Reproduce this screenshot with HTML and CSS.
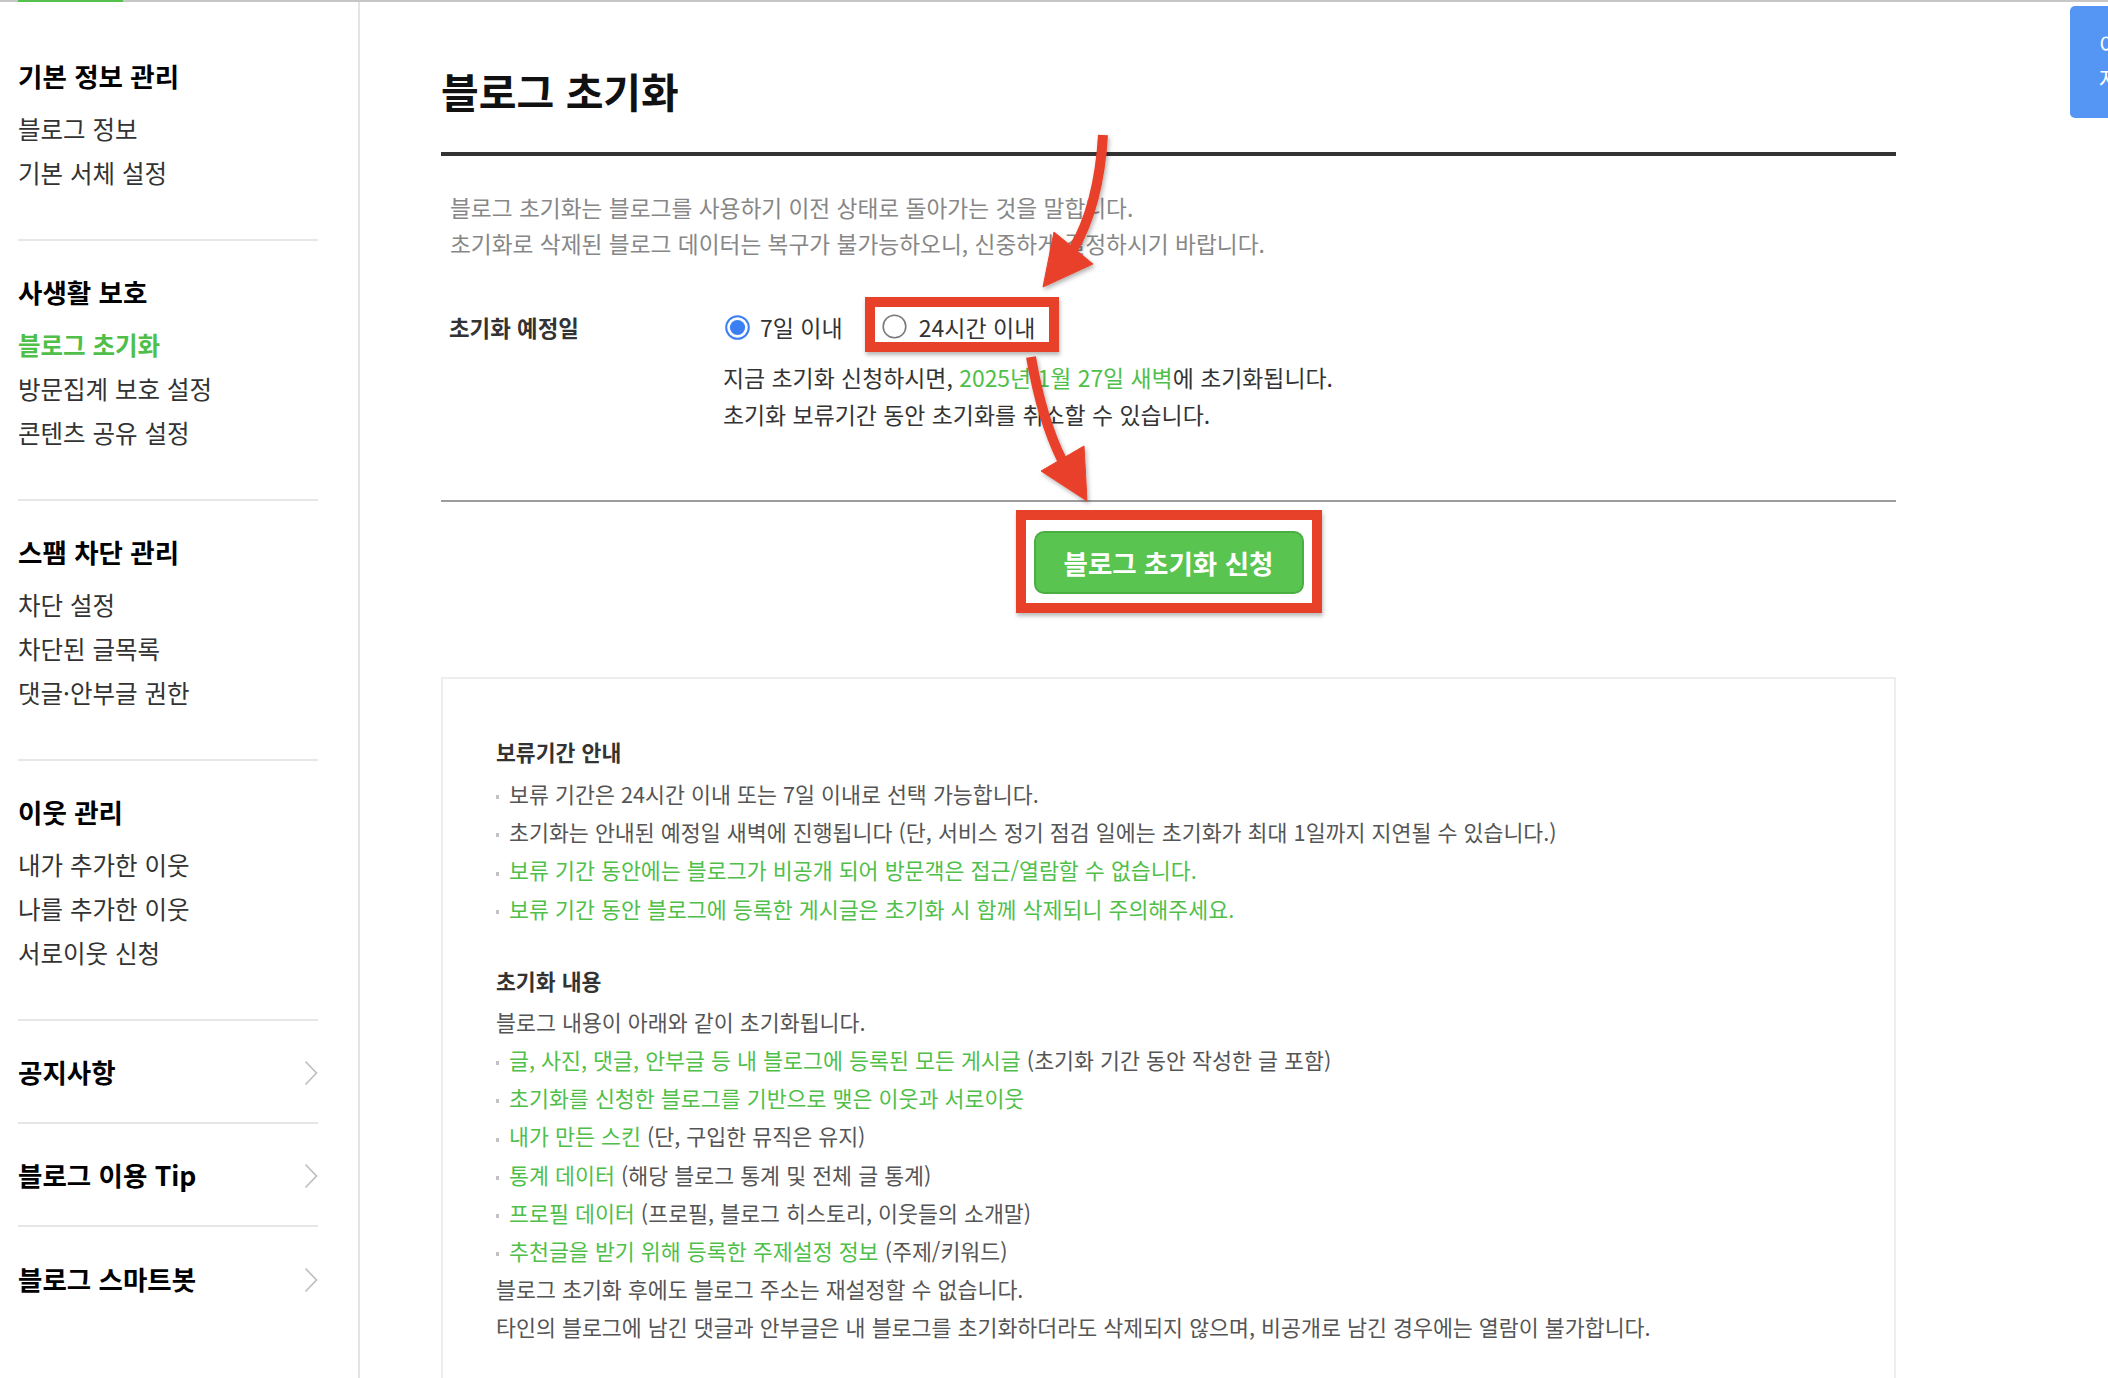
FILE: index.html
```html
<!DOCTYPE html>
<html lang="ko">
<head>
<meta charset="utf-8">
<title>블로그 초기화</title>
<link rel="stylesheet" href="styles.css">
</head>
<body>
<div class="topbar"><span class="topbar-active"></span></div>
<div class="page">
  <aside class="sidebar">
    <section class="side-sec">
      <h3 class="side-head">기본 정보 관리</h3>
      <ul class="side-list">
        <li>블로그 정보</li>
        <li>기본 서체 설정</li>
      </ul>
    </section>
    <section class="side-sec">
      <h3 class="side-head">사생활 보호</h3>
      <ul class="side-list">
        <li class="active">블로그 초기화</li>
        <li>방문집계 보호 설정</li>
        <li>콘텐츠 공유 설정</li>
      </ul>
    </section>
    <section class="side-sec">
      <h3 class="side-head">스팸 차단 관리</h3>
      <ul class="side-list">
        <li>차단 설정</li>
        <li>차단된 글목록</li>
        <li>댓글·안부글 권한</li>
      </ul>
    </section>
    <section class="side-sec">
      <h3 class="side-head">이웃 관리</h3>
      <ul class="side-list">
        <li>내가 추가한 이웃</li>
        <li>나를 추가한 이웃</li>
        <li>서로이웃 신청</li>
      </ul>
    </section>
    <div class="side-link"><span>공지사항</span><svg class="chev" width="14" height="26" viewBox="0 0 14 26"><polyline points="1.5,1.5 12.5,13 1.5,24.5" fill="none" stroke="#bdbdbd" stroke-width="1.6"/></svg></div>
    <div class="side-link"><span>블로그 이용 Tip</span><svg class="chev" width="14" height="26" viewBox="0 0 14 26"><polyline points="1.5,1.5 12.5,13 1.5,24.5" fill="none" stroke="#bdbdbd" stroke-width="1.6"/></svg></div>
    <div class="side-link last"><span>블로그 스마트봇</span><svg class="chev" width="14" height="26" viewBox="0 0 14 26"><polyline points="1.5,1.5 12.5,13 1.5,24.5" fill="none" stroke="#bdbdbd" stroke-width="1.6"/></svg></div>
  </aside>

  <main class="main">
    <h2 class="title">블로그 초기화</h2>
    <div class="desc">
      <p>블로그 초기화는 블로그를 사용하기 이전 상태로 돌아가는 것을 말합니다.</p>
      <p>초기화로 삭제된 블로그 데이터는 복구가 불가능하오니, 신중하게 결정하시기 바랍니다.</p>
    </div>

    <div class="row">
      <div class="row-label">초기화 예정일</div>
      <label class="radio">
        <svg width="25" height="25" viewBox="0 0 25 25"><circle cx="12.5" cy="12.5" r="11.3" fill="#fff" stroke="#3b7ff2" stroke-width="2"/><circle cx="12.5" cy="12.5" r="7.6" fill="#3b7ff2"/></svg>
        <span>7일 이내</span>
      </label>
      <div class="mark mark-radio">
        <label class="radio">
          <svg width="25" height="25" viewBox="0 0 25 25"><circle cx="12.5" cy="12.5" r="11.3" fill="#fff" stroke="#7a7a7a" stroke-width="1.6"/></svg>
          <span>24시간 이내</span>
        </label>
      </div>
    </div>

    <div class="note">
      <p>지금 초기화 신청하시면, <span class="g">2025년 1월 27일 새벽</span>에 초기화됩니다.</p>
      <p>초기화 보류기간 동안 초기화를 취소할 수 있습니다.</p>
    </div>

    <div class="divider"></div>

    <div class="btn-row">
      <div class="mark mark-btn">
        <button class="btn" type="button">블로그 초기화 신청</button>
      </div>
    </div>

    <div class="info">
      <h4 class="info-head">보류기간 안내</h4>
      <ul class="info-list">
        <li>보류 기간은 24시간 이내 또는 7일 이내로 선택 가능합니다.</li>
        <li>초기화는 안내된 예정일 새벽에 진행됩니다 (단, 서비스 정기 점검 일에는 초기화가 최대 1일까지 지연될 수 있습니다.)</li>
        <li class="g">보류 기간 동안에는 블로그가 비공개 되어 방문객은 접근/열람할 수 없습니다.</li>
        <li class="g">보류 기간 동안 블로그에 등록한 게시글은 초기화 시 함께 삭제되니 주의해주세요.</li>
      </ul>
      <h4 class="info-head second">초기화 내용</h4>
      <p class="info-line">블로그 내용이 아래와 같이 초기화됩니다.</p>
      <ul class="info-list">
        <li><span class="g">글, 사진, 댓글, 안부글 등 내 블로그에 등록된 모든 게시글</span> (초기화 기간 동안 작성한 글 포함)</li>
        <li><span class="g">초기화를 신청한 블로그를 기반으로 맺은 이웃과 서로이웃</span></li>
        <li><span class="g">내가 만든 스킨</span> (단, 구입한 뮤직은 유지)</li>
        <li><span class="g">통계 데이터</span> (해당 블로그 통계 및 전체 글 통계)</li>
        <li><span class="g">프로필 데이터</span> (프로필, 블로그 히스토리, 이웃들의 소개말)</li>
        <li><span class="g">추천글을 받기 위해 등록한 주제설정 정보</span> (주제/키워드)</li>
      </ul>
      <p class="info-line">블로그 초기화 후에도 블로그 주소는 재설정할 수 없습니다.</p>
      <p class="info-line">타인의 블로그에 남긴 댓글과 안부글은 내 블로그를 초기화하더라도 삭제되지 않으며, 비공개로 남긴 경우에는 열람이 불가합니다.</p>
    </div>
  </main>
</div>

<div class="side-tab">이전<br>자세히</div>

<svg class="arrows" width="2108" height="1378" viewBox="0 0 2108 1378">
  <defs>
    <filter id="sh" x="-20%" y="-20%" width="140%" height="140%">
      <feDropShadow dx="1.5" dy="2.5" stdDeviation="2" flood-color="#000" flood-opacity="0.3"/>
    </filter>
  </defs>
  <g filter="url(#sh)" fill="#e8412a" stroke="#e8412a">
    <path d="M1103 135 Q1099 205 1073 250" fill="none" stroke-width="10"/>
    <polygon points="1043,287 1093,264 1054,232" stroke-width="1"/>
    <path d="M1031 357 Q1042 420 1062 460" fill="none" stroke-width="10"/>
    <polygon points="1087,501 1041,471 1084,446" stroke-width="1"/>
  </g>
</svg>
</body>
</html>
```

FILE: styles.css
```css
* {
  box-sizing: border-box;
  margin: 0;
  padding: 0;
}

html,
body {
  width: 2108px;
  height: 1378px;
  overflow: hidden;
}

body {
  position: relative;
  background: #fff;
  color: #333;
  font-family: "Noto Sans CJK KR", "Noto Sans", sans-serif;
}

ul {
  list-style: none;
}

.topbar {
  display: flex;
  height: 2px;
  background: #c6c6c6;
}

.topbar-active {
  width: 105px;
  margin-left: 18px;
  background: #55c14d;
}

.page {
  display: flex;
  height: 1376px;
}

/* sidebar */
.sidebar {
  width: 360px;
  flex: none;
  border-right: 2px solid #e4e4e4;
  padding: 52px 0 0 18px;
}

.side-sec {
  width: 300px;
  padding-bottom: 44px;
  border-bottom: 2px solid #e6e6e6;
}

.side-sec + .side-sec {
  padding-top: 29px;
}

.side-head {
  font-size: 26.5px;
  font-weight: 700;
  line-height: 44px;
  color: #000;
  margin-bottom: 9px;
}

.side-list li {
  font-size: 24.5px;
  line-height: 44px;
  color: #333;
}

.side-list li.active {
  color: #4fbf4a;
  font-weight: 700;
}

.side-link {
  width: 300px;
  height: 103px;
  border-bottom: 2px solid #e6e6e6;
  display: flex;
  align-items: center;
  justify-content: space-between;
  font-size: 26.5px;
  font-weight: 700;
  color: #000;
}

.side-link.last {
  border-bottom: none;
}

.chev {
  margin-top: 3px;
}

/* main */
.main {
  flex: 1;
  padding: 0 212px 0 81px;
}

.title {
  font-size: 41px;
  font-weight: 700;
  line-height: 50px;
  padding-top: 63px;
  padding-bottom: 37px;
  border-bottom: 4px solid #333;
  color: #111;
}

.desc {
  padding: 34px 0 0 9px;
  font-size: 22.7px;
  line-height: 36px;
  color: #878787;
}

.row {
  display: flex;
  align-items: center;
  height: 40px;
  margin-top: 45px;
  padding-left: 8px;
}

.row-label {
  width: 276px;
  font-size: 22.4px;
  font-weight: 700;
  color: #333;
}

.radio {
  display: flex;
  align-items: center;
  gap: 10px;
  font-size: 23px;
  color: #333;
}

.radio svg {
  display: block;
}

.mark {
  border: 10px solid #e8412a;
  box-shadow: 1px 3px 4px rgba(0, 0, 0, 0.28);
}

.mark-radio {
  display: flex;
  align-items: center;
  height: 55px;
  margin-left: 22px;
  margin-bottom: 5px;
  padding: 4px 14px 0 7px;
}

.mark-radio .radio {
  gap: 12px;
}

.note {
  margin-top: 12px;
  padding-left: 282px;
  font-size: 22.9px;
  line-height: 37px;
  color: #333;
}

.g {
  color: #4fbf4a;
}

.divider {
  margin-top: 67px;
  border-top: 2px solid #9c9c9c;
}

.btn-row {
  display: flex;
  justify-content: center;
  margin-top: 8px;
}

.mark-btn {
  padding: 11px 8px 9px;
}

.btn {
  display: block;
  width: 270px;
  height: 63px;
  background: #5ac451;
  border: 2px solid #4aae43;
  border-radius: 10px;
  color: #fff;
  font-family: "Noto Sans CJK KR", "Noto Sans", sans-serif;
  font-size: 26.5px;
  font-weight: 700;
}

.info {
  margin-top: 64px;
  height: 800px;
  border: 2px solid #ededed;
  border-bottom: none;
  padding: 54px 0 0 53px;
  font-size: 21.7px;
  color: #555;
}

.info-head {
  font-size: 21.6px;
  font-weight: 700;
  line-height: 38px;
  color: #333;
  margin-bottom: 4px;
}

.info-head.second {
  margin-top: 34px;
  margin-bottom: 3px;
}

.info-list li,
.info-line {
  line-height: 38.2px;
}

.info-list li::before {
  content: "";
  display: inline-block;
  width: 3px;
  height: 4px;
  margin-right: 10px;
  background: #c2c2c2;
  vertical-align: middle;
}

/* floating tab at the right edge */
.side-tab {
  position: absolute;
  top: 6px;
  left: 2070px;
  width: 90px;
  height: 112px;
  padding: 20px 0 0 29px;
  background: #5596f5;
  border-radius: 5px;
  color: #fff;
  font-size: 22px;
  line-height: 34px;
  white-space: nowrap;
}

.arrows {
  position: absolute;
  top: 0;
  left: 0;
  pointer-events: none;
}
```
